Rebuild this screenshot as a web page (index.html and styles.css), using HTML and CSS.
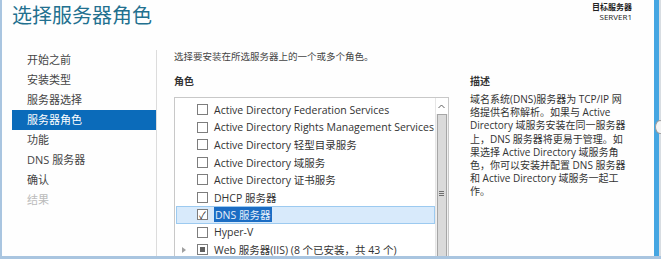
FILE: index.html
```html
<!DOCTYPE html>
<html lang="zh-CN">
<head>
    <meta charset="UTF-8">
    <title>选择服务器角色</title>
    <link rel="stylesheet" href="styles.css">
</head>
<body>
    <div class="window">
        <div class="page">
            <div class="header">
                <h1>选择服务器角色</h1>
                <div class="target">
                    <strong>目标服务器</strong>
                    <span>SERVER1</span>
                </div>
            </div>

            <div class="content">
                <ul class="nav">
                    <li>开始之前</li>
                    <li>安装类型</li>
                    <li>服务器选择</li>
                    <li class="active">服务器角色</li>
                    <li>功能</li>
                    <li>DNS 服务器</li>
                    <li>确认</li>
                    <li class="disabled">结果</li>
                </ul>

                <div class="main">
                    <p class="lead">选择要安装在所选服务器上的一个或多个角色。</p>
                    <div class="columns">
                        <div class="roles">
                            <h2>角色</h2>
                            <div class="listbox">
                                <ul class="items">
                                    <li><span class="check"></span>Active Directory Federation Services</li>
                                    <li><span class="check"></span>Active Directory Rights Management Services</li>
                                    <li><span class="check"></span>Active Directory 轻型目录服务</li>
                                    <li><span class="check"></span>Active Directory 域服务</li>
                                    <li><span class="check"></span>Active Directory 证书服务</li>
                                    <li><span class="check"></span>DHCP 服务器</li>
                                    <li class="selected"><span class="check checked">&#10003;</span><span class="hl">DNS 服务器</span></li>
                                    <li><span class="check"></span>Hyper-V</li>
                                    <li><span class="expander"></span><span class="check partial"></span>Web 服务器(IIS) (8 个已安装，共 43 个)</li>
                                </ul>
                                <div class="scrollbar">
                                    <div class="arrow">
                                        <svg width="7" height="5" viewBox="0 0 7 5"><path d="M0.5 4 L3.5 1 L6.5 4" fill="none" stroke="#606060" stroke-width="1"/></svg>
                                    </div>
                                    <div class="thumb"><span class="grip"></span></div>
                                </div>
                            </div>
                        </div>
                        <div class="desc">
                            <h2>描述</h2>
                            <p>域名系统(DNS)服务器为 TCP/IP 网<br>络提供名称解析。如果与 Active<br>Directory 域服务安装在同一服务器<br>上，DNS 服务器将更易于管理。如<br>果选择 Active Directory 域服务角<br>色，你可以安装并配置 DNS 服务器<br>和 Active Directory 域服务一起工<br>作。</p>
                        </div>
                    </div>
                </div>
            </div>
        </div>
        <div class="edge"></div>
        <div class="knob"></div>
    </div>
</body>
</html>
```

FILE: styles.css
```css
* {
    box-sizing: border-box;
}

body {
    margin: 0;
    width: 661px;
    height: 259px;
    overflow: hidden;
    background: #fff;
    font-family: "Open Sans", "Noto Sans CJK SC", sans-serif;
    color: #333;
}

.window {
    position: relative;
    display: flex;
    width: 661px;
    height: 259px;
    border-left: 2px solid #a9c5e0;
    border-bottom: 3px solid #a9c5e0;
}

.page {
    flex: 1;
    display: flex;
    flex-direction: column;
    min-height: 0;
    background: #fefefe;
}

.edge {
    width: 7px;
    background: linear-gradient(90deg, #45a6e2 0, #45a6e2 5px, #d8dde2 5px);
}

.knob {
    position: absolute;
    right: -4px;
    top: 120px;
    width: 10px;
    height: 14px;
    border: 1px solid #9a9a9a;
    border-radius: 50%;
    background: #f4f4f4;
}

.header {
    display: flex;
    justify-content: space-between;
    height: 46px;
    flex-shrink: 0;
    padding: 0 22px 0 10px;
}

h1 {
    margin: 2px 0 0;
    font-family: "Noto Sans CJK SC", sans-serif;
    font-weight: 400;
    font-size: 20px;
    line-height: 26px;
    color: #22708f;
}

.target {
    display: flex;
    flex-direction: column;
    align-items: flex-end;
    padding-top: 2px;
    font-size: 8px;
    line-height: 10px;
    color: #222;
}

.content {
    flex: 1;
    display: flex;
    min-height: 0;
}

.nav {
    list-style: none;
    margin: 4px 0 0 10px;
    padding: 0;
    width: 145px;
    border-right: 1px solid #dcdcdc;
    font-size: 11px;
    color: #444;
}

.nav li {
    height: 20px;
    line-height: 20px;
    padding-left: 15px;
}

.nav li.active {
    background: #0b6bba;
    color: #fff;
}

.nav li.disabled {
    color: #bbb;
}

.main {
    flex: 1;
    display: flex;
    flex-direction: column;
    padding: 0 0 0 17px;
    min-width: 0;
    min-height: 0;
}

.lead {
    margin: 4px 0 0;
    font-size: 9.5px;
    line-height: 14px;
    color: #444;
}

.columns {
    flex: 1;
    display: flex;
    gap: 21px;
    min-height: 0;
}

h2 {
    margin: 10px 0 0;
    font-size: 10px;
    font-weight: 700;
    line-height: 14px;
    color: #333;
}

.roles {
    display: flex;
    flex-direction: column;
    width: 275px;
}

.listbox {
    flex: 1;
    display: flex;
    margin-top: 9px;
    min-height: 0;
    border: 1px solid #c8c8c8;
    border-bottom: none;
    background: #fff;
    overflow: hidden;
}

.items {
    flex: 1;
    list-style: none;
    margin: 0;
    padding: 3px 0 0 1px;
    font-size: 10.5px;
    color: #333;
}

.items li {
    position: relative;
    display: flex;
    align-items: center;
    height: 17.5px;
    padding-left: 20px;
    white-space: nowrap;
    border: 1px solid transparent;
}

.items li.selected {
    background: #d8eafb;
    border-color: #9ccaf0;
}

.check {
    display: inline-flex;
    justify-content: center;
    align-items: center;
    width: 11px;
    height: 11px;
    margin-right: 6px;
    border: 1px solid #7d7d7d;
    background: #fff;
    font-size: 10px;
    line-height: 1;
    color: #222;
    flex-shrink: 0;
}

.check.partial::after {
    content: "";
    width: 5px;
    height: 5px;
    background: #606060;
}

.hl {
    background: #1b6dc4;
    color: #e8f0fa;
    padding: 0 1px;
}

.expander {
    position: absolute;
    left: 5px;
    top: 5px;
    width: 0;
    height: 0;
    border-left: 4px solid #a0a0a0;
    border-top: 3.5px solid transparent;
    border-bottom: 3.5px solid transparent;
}

.scrollbar {
    display: flex;
    flex-direction: column;
    width: 15px;
    border-left: 1px solid #e6e6e6;
    background: #f0f0f0;
}

.arrow {
    display: flex;
    justify-content: center;
    align-items: center;
    height: 16px;
    background: #fff;
}

.thumb {
    flex: 1;
    display: flex;
    justify-content: center;
    padding-top: 76px;
    margin: 0 1px;
    border: 1px solid #a6a6a6;
    border-bottom: none;
    background: #dadada;
}

.grip {
    width: 5px;
    height: 6px;
    background: repeating-linear-gradient(180deg, #707070 0, #707070 1px, transparent 1px, transparent 2px);
}

.desc {
    width: 165px;
}

.desc p {
    margin: 5px 0 0;
    font-size: 10px;
    line-height: 13.2px;
    color: #333;
    white-space: nowrap;
}
```
